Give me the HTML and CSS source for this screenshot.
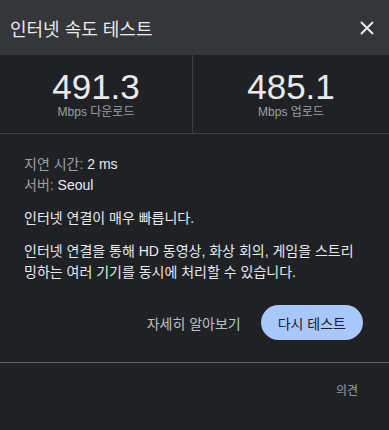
FILE: index.html
```html
<!DOCTYPE html>
<html lang="ko">
<head>
    <meta charset="UTF-8">
    <meta name="viewport" content="width=device-width, initial-scale=1.0">
    <title>인터넷 속도 테스트</title>
    <link rel="stylesheet" href="styles.css">
</head>
<body>
    <!-- 헤더 -->
    <header class="top">
        <h1>인터넷 속도 테스트</h1>
        <button class="close" aria-label="닫기">
            <svg width="14" height="14" viewBox="0 0 14 14">
                <path d="M1 1L13 13M13 1L1 13" stroke="#e8eaed" stroke-width="2"/>
            </svg>
        </button>
    </header>

    <!-- 결과 -->
    <section class="speeds">
        <div class="speed">
            <div class="num">491.3</div>
            <div class="unit">Mbps 다운로드</div>
        </div>
        <div class="speed">
            <div class="num">485.1</div>
            <div class="unit">Mbps 업로드</div>
        </div>
    </section>

    <section class="info">
        <div class="meta">
            <p><span class="label">지연 시간:</span> 2 ms</p>
            <p><span class="label">서버:</span> Seoul</p>
        </div>
        <p class="msg">인터넷 연결이 매우 빠릅니다.</p>
        <p class="msg">인터넷 연결을 통해 HD 동영상, 화상 회의, 게임을 스트리밍하는 여러 기기를 동시에 처리할 수 있습니다.</p>

        <div class="actions">
            <a href="#" class="more">자세히 알아보기</a>
            <button class="retry">다시 테스트</button>
        </div>
    </section>

    <!-- 푸터 -->
    <footer>
        <a href="#">의견</a>
    </footer>
</body>
</html>
```

FILE: styles.css
```css
/* 전체 */
body {
    margin: 0;
    font-family: 'Liberation Sans', 'Noto Sans CJK KR', sans-serif;
    background: #202124;
    color: #e8eaed;
    width: 389px;
    height: 430px;
    overflow: hidden;
}

/* 헤더 */
.top {
    height: 55px;
    background: #35363a;
    display: flex;
    align-items: center;
    justify-content: space-between;
    padding: 0 15px 0 10px;
}

.top h1 {
    margin: 0;
    font-size: 18px;
    font-weight: normal;
    color: #e8eaed;
}

.close {
    background: none;
    border: none;
    padding: 0;
    display: flex;
    cursor: pointer;
}

/* 속도 */
.speeds {
    display: grid;
    grid-template-columns: 193px 1fr;
    height: 78px;
    border-bottom: 1px solid #3c4043;
}

.speed {
    display: flex;
    flex-direction: column;
    align-items: center;
    padding-top: 14px;
}

.speed:first-child {
    border-right: 1px solid #3c4043;
}

.num {
    font-size: 35px;
    line-height: 36px;
    color: #e8eaed;
}

.unit {
    font-size: 12px;
    line-height: 14px;
    color: #9aa0a6;
}

/* 정보 */
.info {
    padding: 20px 24px 0;
    font-size: 14px;
}

.info p {
    margin: 0;
}

.meta p {
    line-height: 21px;
}

.label {
    color: #9aa0a6;
}

.msg {
    line-height: 21px;
    margin-top: 12px !important;
}

.actions {
    display: flex;
    justify-content: flex-end;
    align-items: center;
    gap: 20px;
    margin: 22px -24px 0;
    padding: 0 26px 22px 0;
    border-bottom: 1px solid #5f6368;
}

.more {
    color: #bdc1c6;
    text-decoration: none;
    font-size: 14px;
}

.retry {
    background: #a8c7fa;
    color: #202124;
    border: none;
    border-radius: 18px;
    height: 35px;
    padding: 0 17px;
    font-family: inherit;
    font-size: 14px;
    cursor: pointer;
}

/* 푸터 */
footer {
    display: flex;
    justify-content: flex-end;
    padding: 18px 31px 0 0;
}

footer a {
    color: #9aa0a6;
    font-size: 12px;
    text-decoration: none;
}
```
